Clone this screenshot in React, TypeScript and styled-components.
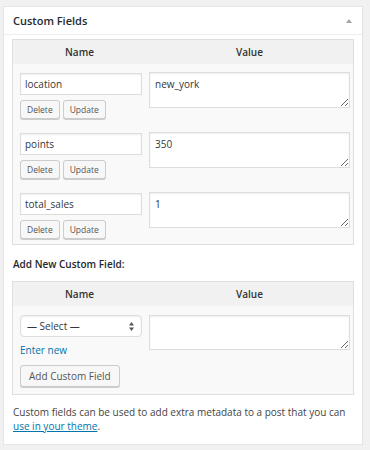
import * as React from 'react'
import styled, { createGlobalStyle } from 'styled-components'

const GlobalStyle = createGlobalStyle`
  html, body {
    margin: 0;
    padding: 0;
    background: #f1f1f1;
    font-family: "Open Sans", "Liberation Sans", sans-serif;
    font-size: 10px;
    color: #444;
  }
`

const Panel = styled.div`
  width: 358px;
  margin: 6px 0 0 3px;
  background: #fff;
  border: 1px solid #e5e5e5;
  box-shadow: 0 1px 1px rgba(0, 0, 0, 0.04);
`

const PanelHeader = styled.div`
  display: flex;
  align-items: center;
  justify-content: space-between;
  height: 27px;
  padding: 0 10px 0 9px;
  border-bottom: 1px solid #eee;

  .title {
    font-size: 11px;
    font-weight: 600;
    color: #23282d;
  }
`

const Toggle = styled.span`
  width: 0;
  height: 0;
  margin-top: 1px;
  border-left: 3px solid transparent;
  border-right: 3px solid transparent;
  border-bottom: 4px solid #a0a5aa;
`

const PanelBody = styled.div`
  padding: 4px 8px 11px 8px;
`

const FieldTable = styled.div`
  border: 1px solid #dfdfdf;
  background: #f9f9f9;
`

const HeadRow = styled.div`
  display: grid;
  grid-template-columns: 133px 1fr;
  height: 24px;
  align-items: center;
  background: #f1f1f1;
  font-weight: 600;
  font-size: 10px;
  color: #333;

  div {
    text-align: center;
  }
`

const Row = styled.div`
  display: grid;
  grid-template-columns: 122px 201px;
  column-gap: 7px;
  height: 60px;
  padding: 8px 0 0 7px;
  box-sizing: border-box;
`

const NameCell = styled.div`
  display: flex;
  flex-direction: column;
  align-items: flex-start;
  padding-top: 1px;
`

const TextInput = styled.input`
  box-sizing: border-box;
  width: 122px;
  height: 22px;
  margin: 0;
  padding: 2px 4px;
  border: 1px solid #ddd;
  box-shadow: inset 0 1px 2px rgba(0, 0, 0, 0.07);
  font-family: inherit;
  font-size: 10px;
  color: #32373c;
  outline: none;
`

const ValueArea = styled.textarea<{ $h: number }>`
  box-sizing: border-box;
  width: 201px;
  height: ${p => p.$h}px;
  margin: 0;
  padding: 4px 5px;
  border: 1px solid #ddd;
  box-shadow: inset 0 1px 2px rgba(0, 0, 0, 0.07);
  font-family: inherit;
  font-size: 10px;
  line-height: 14px;
  color: #32373c;
  outline: none;
`

const ButtonRow = styled.div`
  display: flex;
  gap: 3px;
  margin-top: 5px;
`

const SmallButton = styled.button`
  box-sizing: border-box;
  height: 19px;
  padding: 0 6px;
  margin: 0;
  border: 1px solid #ccc;
  border-radius: 3px;
  background: #f7f7f7;
  box-shadow: 0 1px 0 #ccc;
  font-family: inherit;
  font-size: 8.5px;
  line-height: 17px;
  color: #555;
`

const AddTitle = styled.div`
  font-weight: 600;
  font-size: 10px;
  line-height: 14px;
  color: #23282d;
  padding: 12px 0 10px 1px;
`

const NewRow = styled.div`
  display: grid;
  grid-template-columns: 122px 201px;
  column-gap: 7px;
  padding: 9px 0 7px 7px;
`

const SelectBox = styled.div`
  position: relative;
  width: 122px;

  select {
    box-sizing: border-box;
    width: 122px;
    height: 22px;
    margin: 0;
    padding: 0 20px 0 6px;
    border: 1px solid #ddd;
    border-radius: 4px;
    background: #fff;
    box-shadow: inset 0 1px 2px rgba(0, 0, 0, 0.07);
    appearance: none;
    font-family: inherit;
    font-size: 10px;
    color: #32373c;
    outline: none;
  }

  svg {
    position: absolute;
    right: 8px;
    top: 7px;
    pointer-events: none;
  }
`

const EnterNew = styled.a`
  display: block;
  margin-top: 6px;
  color: #0073aa;
  text-decoration: none;
  font-size: 10px;
  line-height: 14px;
`

const AddButton = styled.button`
  box-sizing: border-box;
  height: 22px;
  margin-top: 8px;
  padding: 0 8px;
  border: 1px solid #ccc;
  border-radius: 3px;
  background: #f7f7f7;
  box-shadow: 0 1px 0 #ccc;
  font-family: inherit;
  font-size: 10px;
  line-height: 20px;
  color: #555;
`

const Note = styled.p`
  margin: 10px 0 0 1px;
  font-size: 10px;
  line-height: 14px;
  color: #444;

  a {
    color: #0073aa;
    text-decoration: underline;
  }
`

const fields = [
  { name: 'location', value: 'new_york' },
  { name: 'points', value: '350' },
  { name: 'total_sales', value: '1' },
]

export default function App() {
  return (
    <>
      <GlobalStyle />
      <Panel>
        <PanelHeader>
          <span className="title">Custom Fields</span>
          <Toggle />
        </PanelHeader>
        <PanelBody>
          <FieldTable>
            <HeadRow>
              <div>Name</div>
              <div>Value</div>
            </HeadRow>
            {fields.map(f => (
              <Row key={f.name}>
                <NameCell>
                  <TextInput defaultValue={f.name} />
                  <ButtonRow>
                    <SmallButton>Delete</SmallButton>
                    <SmallButton>Update</SmallButton>
                  </ButtonRow>
                </NameCell>
                <ValueArea $h={36} defaultValue={f.value} />
              </Row>
            ))}
          </FieldTable>

          <AddTitle>Add New Custom Field:</AddTitle>

          <FieldTable>
            <HeadRow>
              <div>Name</div>
              <div>Value</div>
            </HeadRow>
            <NewRow>
              <div>
                <SelectBox>
                  <select defaultValue="">
                    <option value="">— Select —</option>
                  </select>
                  <svg width="5" height="9" viewBox="0 0 5 9">
                    <path d="M2.5 0 L5 3.5 H0 Z M2.5 9 L0 5.5 H5 Z" fill="#555" />
                  </svg>
                </SelectBox>
                <EnterNew href="#">Enter new</EnterNew>
                <AddButton>Add Custom Field</AddButton>
              </div>
              <ValueArea $h={35} />
            </NewRow>
          </FieldTable>

          <Note>
            Custom fields can be used to add extra metadata to a post that you can{' '}
            <a href="#">use in your theme</a>.
          </Note>
        </PanelBody>
      </Panel>
    </>
  )
}
